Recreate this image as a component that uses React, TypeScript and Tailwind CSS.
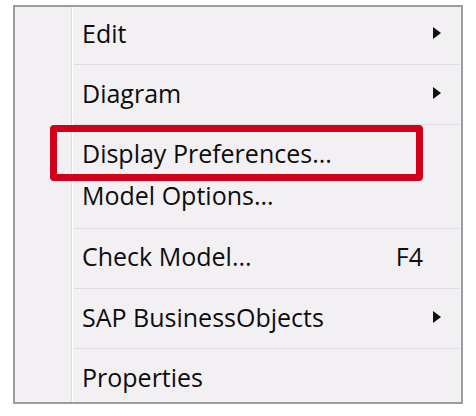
import React from "react";

const Arrow = () => (
  <svg width="8" height="12" viewBox="0 0 8 12" className="block">
    <path d="M0 0 L8 6 L0 12 Z" fill="#111" />
  </svg>
);

const Sep = () => (
  <div className="flex flex-col ml-[1px] mr-[2px]">
    <div className="h-px bg-[#dddbe0]" />
  </div>
);

type ItemProps = {
  label: string;
  h: number;
  pt?: number;
  pb?: number;
  arrow?: boolean;
  shortcut?: string;
};

const Item = ({ label, arrow, shortcut, h, pt = 0, pb = 0 }: ItemProps) => (
  <div
    className="flex items-center pl-[9px]"
    style={{ height: h, paddingTop: pt, paddingBottom: pb }}
  >
    <span className="flex-1 text-[25px] leading-none text-[#0d0d0d]">{label}</span>
    {shortcut && <span className="text-[25px] leading-none text-[#0d0d0d] mr-[38px]">{shortcut}</span>}
    {arrow && (
      <span className="mr-[20px]">
        <Arrow />
      </span>
    )}
  </div>
);

export default function App() {
  return (
    <div
      className="w-[476px] h-[416px] bg-white pl-[13px] pt-[5px]"
      style={{ fontFamily: '"Open Sans", "Noto Sans", sans-serif' }}
    >
      <div className="relative w-[450px] h-[399px] border-2 border-[#9c9c9c] bg-[#f3f0f4] flex">
        <div className="w-[56px] shrink-0" />
        <div className="w-px bg-[#dedce1] shrink-0" />
        <div className="w-px bg-white shrink-0" />
        <div className="flex-1 flex flex-col">
          <Item label="Edit" arrow h={57} pb={5} />
          <Sep />
          <Item label="Diagram" arrow h={59} pb={3} />
          <Sep />
          <div className="flex flex-col pt-[8px] pb-[12px]">
            <Item label="Display Preferences..." h={41} />
            <Item label="Model Options..." h={42} />
          </div>
          <Sep />
          <Item label="Check Model..." shortcut="F4" h={59} pb={5} />
          <Sep />
          <Item label="SAP BusinessObjects" arrow h={59} pb={3} />
          <Sep />
          <Item label="Properties" h={53} pt={3} />
        </div>
        <div className="absolute left-[35px] top-[118px] w-[373px] h-[56px] border-[7px] border-[#d2001a] rounded-[4px]" />
      </div>
    </div>
  );
}
